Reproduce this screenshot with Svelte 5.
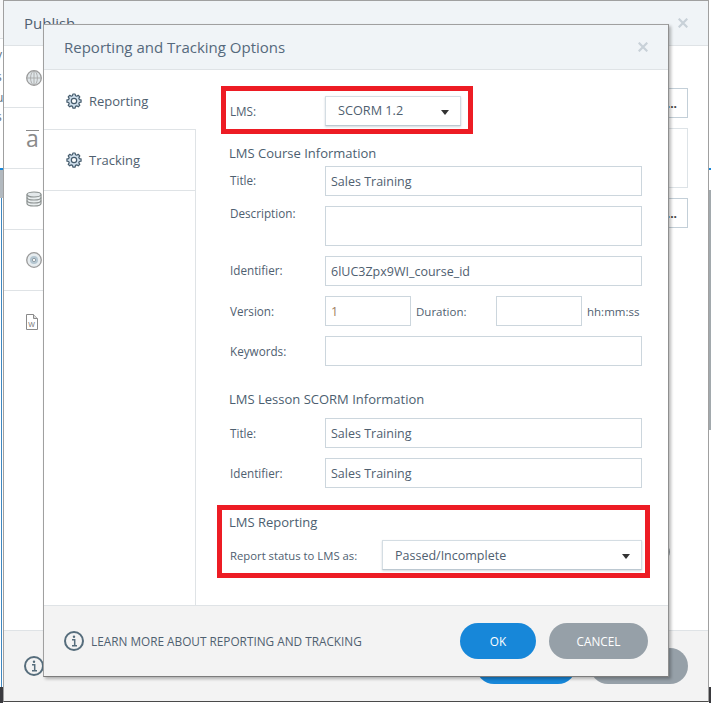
<script>
  const gear = "M10.300 1.500h3.400l.5 2.600 1.900.8 2.200-1.500 2.400 2.400-1.500 2.200.8 1.900 2.600.5v3.400l-2.600.5-.8 1.900 1.500 2.200-2.400 2.400-2.200-1.500-1.900.8-.5 2.600h-3.400l-.5-2.600-1.900-.8-2.200 1.500-2.400-2.400 1.500-2.200-.8-1.900-2.600-.5v-3.400l2.600-.5.8-1.900-1.500-2.200 2.400-2.400 2.200 1.500 1.900-.8z";
</script>

{#snippet gearIcon()}
  <svg class="gear" viewBox="0 0 24 24" width="16" height="16">
    <path d={gear} fill="#cfdfec" stroke="#465c6d" stroke-width="1.800" stroke-linejoin="round" />
    <circle cx="12" cy="12" r="4" fill="#fff" stroke="#465c6d" stroke-width="1.800" />
  </svg>
{/snippet}

{#snippet infoIcon()}
  <svg class="info" viewBox="0 0 20 20" width="20" height="20">
    <circle cx="10" cy="10" r="9" fill="none" stroke="#566d7c" stroke-width="2" />
    <circle cx="10" cy="5.800" r="1.200" fill="#566d7c" />
    <path d="M8 8.700h2.700v6M8 14.800h5" fill="none" stroke="#566d7c" stroke-width="1.500" />
  </svg>
{/snippet}

{#snippet closeIcon()}
  <svg viewBox="0 0 10 10" width="10" height="10">
    <path d="M.7.700l8.600 8.600M9.300.700L.7 9.300" stroke="#c8d1d8" stroke-width="2.200" />
  </svg>
{/snippet}

<div class="page">
  <div class="strip left-strip">
    <div class="lst-top"></div>
    <div class="lst-text">
      <span class="f1">y</span>
      <span class="f2">s</span>
      <span class="f3">u</span>
      <span class="f4">s</span>
    </div>
    <div class="bar-blue"></div>
    <div class="lst-grey"></div>
    <div class="lst-line"></div>
    <div class="dark-end"></div>
  </div>
  <div class="strip right-strip">
    <div class="rst-white"></div>
    <div class="bar-blue"></div>
    <div class="rst-pale"></div>
    <div class="rst-grey"></div>
    <div class="rst-low"></div>
    <div class="dark-end"></div>
  </div>

  <section class="publish">
    <header class="pub-head"><span>Publish</span>{@render closeIcon()}</header>
    <div class="pub-body">
      <nav class="pub-nav">
        <div class="pub-item first">
          <svg viewBox="0 0 16 16" width="16" height="16"><circle cx="8" cy="8" r="7.300" fill="#dfe5e8" stroke="#9a9a9a" stroke-width="1.300"/><ellipse cx="8" cy="8" rx="3.400" ry="7" fill="none" stroke="#a8a8a8" stroke-width=".9"/><path d="M1 8h14M8 1v14" stroke="#a8a8a8" stroke-width=".9"/></svg>
        </div>
        <div class="pub-item"><span class="a-glyph">a</span></div>
        <div class="pub-item">
          <svg viewBox="0 0 16 16" width="16" height="16"><path d="M1 3.500v9c0 1.400 3.100 2.500 7 2.500s7-1.100 7-2.500v-9" fill="#e8edee" stroke="#8c9291" stroke-width="1.200"/><ellipse cx="8" cy="3.500" rx="7" ry="2.500" fill="#e3e8ea" stroke="#8c9291" stroke-width="1.200"/><path d="M1 6.500c0 1.400 3.100 2.500 7 2.500s7-1.100 7-2.500M1 9.500c0 1.400 3.100 2.500 7 2.500s7-1.100 7-2.500" fill="none" stroke="#8c9291" stroke-width="1.200"/></svg>
        </div>
        <div class="pub-item">
          <svg viewBox="0 0 16 16" width="16" height="16"><circle cx="8" cy="8" r="7.300" fill="#e6ecef" stroke="#9a9a9a" stroke-width="1.300"/><circle cx="8" cy="8" r="4" fill="#b4c6d1"/><circle cx="8" cy="8" r="1.600" fill="#fff" stroke="#7f8c93" stroke-width=".8"/></svg>
        </div>
        <div class="pub-item last">
          <svg viewBox="0 0 12 16" width="12" height="16"><path d="M.5.500h7l4 4v11H.5z" fill="#fff" stroke="#8a8a8a"/><path d="M7.500.500v4h4" fill="#ddd" stroke="#8a8a8a"/><text x="5.600" y="12.500" class="w-letter">W</text></svg>
        </div>
      </nav>
      <div class="pub-main">
        <div class="ghost g1">...</div>
        <div class="ghost g2"></div>
        <div class="ghost g3">...</div>
        <div class="knob"></div>
      </div>
    </div>
    <footer class="pub-foot">
      {@render infoIcon()}
      <div class="pub-buttons">
        <span class="pub-ok"></span>
        <span class="pub-cancel"></span>
      </div>
    </footer>
  </section>

  <section class="dialog">
    <header class="dlg-head">
      <h1>Reporting and Tracking Options</h1>
      {@render closeIcon()}
    </header>
    <div class="dlg-body">
      <aside class="tabs">
        <div class="tab active">{@render gearIcon()}<span>Reporting</span></div>
        <div class="tab">{@render gearIcon()}<span>Tracking</span></div>
      </aside>
      <main class="form">
        <div class="marked top-mark">
          <div class="row lms-row">
            <span class="lab">LMS:</span>
            <div class="select small"><span>SCORM 1.2</span><i class="caret"></i></div>
          </div>
        </div>

        <h2 class="h-course">LMS Course Information</h2>
        <div class="row"><span class="lab up">Title:</span><div class="input">Sales Training</div></div>
        <div class="row desc"><span class="lab">Description:</span><div class="input tall"></div></div>
        <div class="row"><span class="lab up">Identifier:</span><div class="input">6lUC3Zpx9WI_course_id</div></div>
        <div class="row">
          <span class="lab">Version:</span>
          <div class="input short num">1</div>
          <span class="lab-dur">Duration:</span>
          <div class="input short"></div>
          <span class="lab-hint">hh:mm:ss</span>
        </div>
        <div class="row"><span class="lab">Keywords:</span><div class="input"></div></div>

        <h2 class="h-lesson">LMS Lesson SCORM Information</h2>
        <div class="row"><span class="lab">Title:</span><div class="input">Sales Training</div></div>
        <div class="row"><span class="lab">Identifier:</span><div class="input">Sales Training</div></div>

        <div class="marked bottom-mark">
          <h2>LMS Reporting</h2>
          <div class="row status-row">
            <span class="lab-status">Report status to LMS as:</span>
            <div class="select wide"><span>Passed/Incomplete</span><i class="caret"></i></div>
          </div>
        </div>
      </main>
    </div>
    <footer class="dlg-foot">
      {@render infoIcon()}
      <span class="learn">LEARN MORE ABOUT REPORTING AND TRACKING</span>
      <button class="btn ok">OK</button>
      <button class="btn cancel">CANCEL</button>
    </footer>
  </section>
</div>

<style>
  :global(body) { margin: 0; }
  .page {
    position: relative;
    width: 711px;
    height: 703px;
    overflow: hidden;
    background: #fff;
    font-family: "Open Sans", "Noto Sans", sans-serif;
    color: #4f6070;
  }
  .strip { position: absolute; top: 0; bottom: 0; width: 3px; display: flex; flex-direction: column; overflow: hidden; }
  .left-strip { left: 0; }
  .right-strip { left: 709px; width: 2px; }
  .lst-top { height: 38px; flex: none; background: #f7f8f9; border-bottom: 1px solid #dfe3e6; }
  .lst-text { height: 129px; flex: none; position: relative; }
  .lst-text span { position: absolute; left: -4px; font-size: 12px; line-height: 14px; color: #5d6f80; }
  .f1 { top: 9px; } .f2 { top: 31px; } .f3 { top: 52px; } .f4 { top: 71px; }
  .bar-blue { height: 2px; flex: none; background: #1787d9; }
  .lst-grey { height: 28px; flex: none; background: #b2b9bf; }
  .lst-line { flex: 1; box-sizing: border-box; width: 2px; border-right: 1px solid #3f87c0; }
  .dark-end { height: 16px; flex: none; background: #3a3a3e; }
  .rst-white { height: 168px; flex: none; }
  .rst-pale { height: 20px; flex: none; }
  .rst-grey { height: 240px; flex: none; background: #a2a9ad; }
  .rst-low { flex: 1; }

  .publish {
    position: absolute;
    left: 3px; top: 0;
    width: 706px; height: 702px;
    box-sizing: border-box;
    border: 1px solid #a0a0a0;
    border-bottom-color: #4a4a4a;
    background: #fff;
    display: flex;
    flex-direction: column;
  }
  .pub-head {
    height: 44px;
    flex: none;
    background: #f0f4f7;
    border-bottom: 1px solid #dfe3e6;
    display: flex;
    align-items: center;
    justify-content: space-between;
    padding: 0 20px 0 20px;
    font-size: 15px;
  }
  .pub-body { flex: 1; display: flex; min-height: 0; }
  .pub-nav { width: 40px; flex: none; }
  .pub-item {
    height: 61px;
    box-sizing: border-box;
    border-bottom: 1px solid #dfe3e6;
    display: flex;
    align-items: center;
    padding-left: 22px;
  }
  .pub-item.first { height: 62px; padding-top: 3px; }
  .pub-item svg { flex: none; }
  .pub-item.last { border-bottom: 0; }
  .a-glyph { font-size: 23px; color: #8a8a8a; border-top: 1px solid #8a8a8a; line-height: 15px; height: 15px; }
  .w-letter { font-size: 7px; fill: #777; text-anchor: middle; font-family: "Liberation Sans", sans-serif; }
  .pub-main { flex: 1; position: relative; }
  .ghost {
    position: absolute;
    left: 580px;
    width: 64px;
    box-sizing: border-box;
    border: 1px solid #c3cfd8;
    background: #fff;
    font-size: 12px;
    font-weight: 700;
    line-height: 30px;
    text-align: right;
    padding-right: 10px;
    color: #444;
  }
  .g1 { top: 42px; height: 30px; }
  .g2 { top: 82px; height: 60px; border-color: #dde3e7; }
  .g3 { top: 152px; height: 30px; }
  .knob { position: absolute; left: 608px; top: 497px; width: 18px; height: 18px; border-radius: 50%; background: #98a1a8; }
  .pub-foot {
    height: 71px;
    flex: none;
    box-sizing: border-box;
    background: #f3f3f3;
    border-top: 1px solid #dfe3e6;
    display: flex;
    align-items: center;
    justify-content: space-between;
    padding: 0 20px;
  }
  .pub-buttons { display: flex; gap: 14px; }
  .pub-ok { width: 100px; height: 36px; border-radius: 18px; background: #1787d9; }
  .pub-cancel { width: 98px; height: 36px; border-radius: 18px; background: #96a0a8; }

  .dialog {
    position: absolute;
    left: 43px; top: 24px;
    width: 626px; height: 653px;
    box-sizing: border-box;
    background: #fff;
    border: 1px solid #a0a0a0;
    border-right-color: #8f8f8f;
    border-bottom-color: #7c7c7c;
    box-shadow: 2px 2px 3px rgba(0,0,0,.28);
    display: flex;
    flex-direction: column;
  }
  .dlg-head {
    height: 45px;
    box-sizing: border-box;
    flex: none;
    background: #f0f4f7;
    border-bottom: 1px solid #dfe3e6;
    display: flex;
    align-items: center;
    justify-content: space-between;
    padding: 0 20px;
  }
  h1 { margin: 0; font-size: 15px; font-weight: 400; color: #55697c; }
  .dlg-body { flex: 1; display: flex; min-height: 0; }
  .tabs { width: 151px; flex: none; border-right: 1px solid #dfe3e6; position: relative; }
  .tab {
    height: 61px;
    box-sizing: border-box;
    border-bottom: 1px solid #dfe3e6;
    display: flex;
    align-items: center;
    gap: 7px;
    padding-left: 22px;
    font-size: 13px;
  }
  .tab.active {
    height: 60px;
    padding-top: 3px;
    font-weight: 500;
    margin-right: -1px;
    background: #fff;
    position: relative;
  }
  .form {
    width: 472px;
    flex: none;
    box-sizing: border-box;
    padding: 16px 26px 0 33px;
    font-size: 11.700px;
  }
  .row { display: flex; align-items: center; height: 30px; margin-bottom: 10px; }
  .lab { width: 95px; padding-left: 1px; flex: none; position: relative; }
  .lab.up { top: -1px; }
  h2 { margin: 0; font-size: 13px; line-height: 18px; font-weight: 500; color: #4c5e70; }
  .input {
    flex: 1;
    height: 30px;
    box-sizing: border-box;
    border: 1px solid #ccd6dd;
    background: #fff;
    font-size: 12.500px;
    line-height: 29px;
    padding-left: 5px;
  }
  .input.tall { height: 40px; }
  .row.desc { height: 40px; align-items: flex-start; }
  .row.desc .lab { line-height: 15px; }
  .input.short { flex: 0 0 86px; }
  .num { color: #a08060; }
  .lab-dur { width: 85px; padding-left: 5px; box-sizing: border-box; flex: none; font-size: 11.500px; }
  .lab-hint { padding-left: 5px; font-size: 11.500px; white-space: nowrap; }
  .h-course { margin: 10px 0 4px; }
  .h-lesson { margin: 24px 0 10px; }
  .marked { box-sizing: border-box; border: 5px solid #ed1c24; }
  .top-mark {
    margin-left: -8px;
    width: 252px;
    height: 48px;
    padding: 5px 0 0 3px;
  }
  .lms-row { margin: 0; }
  .select {
    height: 30px;
    box-sizing: border-box;
    background: #fff;
    border: 1px solid #d4dde3;
    border-bottom-color: #bcc8d1;
    box-shadow: 0 1px 2px rgba(120,140,155,.35);
    display: flex;
    align-items: center;
    justify-content: space-between;
    font-size: 12.500px;
  }
  .select.small { width: 136px; padding: 0 11px 0 12px; font-size: 12.700px; }
  .select.small span { position: relative; top: -1px; }
  .select.wide { flex: 1; padding: 0 11px 0 12px; }
  .caret {
    width: 0; height: 0;
    border-left: 4px solid transparent;
    border-right: 4px solid transparent;
    border-top: 5px solid #333;
    margin-top: 2px;
  }
  .bottom-mark {
    margin: 17px 0 0 -12px;
    width: 433px;
    height: 73px;
    padding: 3px 3px 0 7px;
  }
  .bottom-mark h2 { margin-bottom: 9px; }
  .status-row { margin: 0; }
  .lab-status { width: 153px; padding-left: 1px; flex: none; font-size: 11.300px; box-sizing: border-box; }
  .dlg-foot {
    height: 71px;
    flex: none;
    box-sizing: border-box;
    background: #f3f3f3;
    border-top: 1px solid #dfe3e6;
    display: flex;
    align-items: center;
    padding: 0 20px;
    font-size: 11.800px;
  }
  .learn { margin-left: 7px; flex: 1; }
  .btn {
    height: 36px;
    border: 0;
    border-radius: 18px;
    color: #fff;
    font: inherit;
    padding: 0;
  }
  .ok { width: 76px; background: #1787d9; margin-right: 13px; }
  .cancel { width: 99px; background: #96a0a8; }
</style>
